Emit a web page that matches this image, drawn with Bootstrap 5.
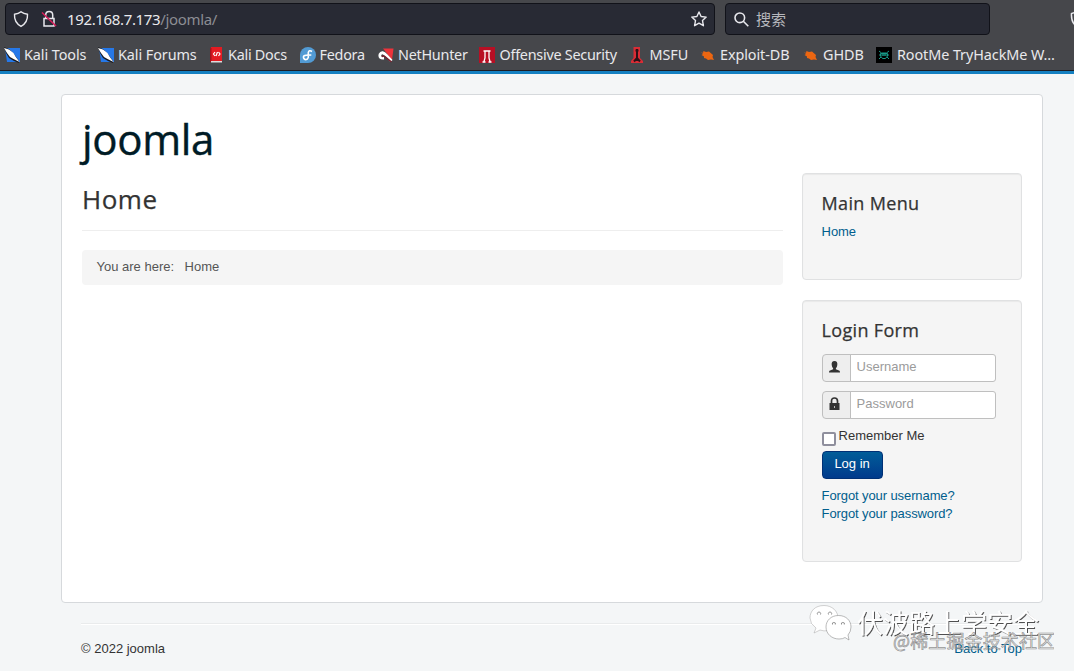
<!DOCTYPE html>
<html lang="en">
<head>
<meta charset="utf-8">
<meta name="viewport" content="width=device-width, initial-scale=1">
<title>joomla</title>
<link rel="stylesheet" href="https://cdn.jsdelivr.net/npm/bootstrap@5.3.0/dist/css/bootstrap.min.css">
<style>
body{font:13px/18px "Liberation Sans",Arial,sans-serif;color:#333;background:#f4f6f7;height:671px;overflow:hidden}
a{color:#005e8d;text-decoration:none}
h1,h2,h3{font-family:"Open Sans","Noto Sans",sans-serif;font-weight:400;margin:0;white-space:nowrap;-webkit-text-stroke:.25px currentColor}
svg{display:block;flex:none}
.browser{height:71px;background:#46474b;border-bottom:1px solid #1c1d24;font:15px/20px "Noto Sans","Noto Sans CJK SC",sans-serif;color:#e9e9ec;overflow:hidden}
.toolbar-row{padding:3px 0 0 5px;height:39px}
.field{height:32px;background:#282a34;border:1px solid #111219;border-radius:4px}
.address{width:710px;padding:0 7px}
.url{letter-spacing:-.35px}
.url-path{color:#8c8d93}
.lock{margin:0 10px 0 12px}
.search{width:265px;margin-left:10px;padding-left:8px;color:#b7b8bd}
.bookmarks{display:grid;grid-template-columns:94px 111px 91px 78px 101px 151px 70px 104px 72px 190px;padding-left:4px;height:32px;align-items:center;font-size:14.4px;letter-spacing:-.08px}
.bookmarks span{display:flex;align-items:center;gap:4px;white-space:nowrap}
.bookmarks .tight{letter-spacing:-.26px}
.site{border-top:3px solid #1580c1;height:600px;padding:20px 31px 0 61px}
.sheet{height:509px;background:#fff;border:1px solid #d6d9dc;border-radius:4px;padding:20px}
.brand-title{font-size:42px;line-height:48px;color:#001b26;letter-spacing:-.3px;-webkit-text-stroke-width:.4px}
.columns{gap:19px;margin-top:10px}
.main{width:701px}
.main h2{font-size:26px;line-height:36px;padding:8px 0 13px;height:58px;border-bottom:1px solid #eee;letter-spacing:.5px}
.crumbs{background:#f5f5f5;border-radius:4px;height:35px;margin-top:19px;padding:8px 14.5px;color:#555}
.side{width:220px}
.well{background:#f5f5f5;border:1px solid #e0e1e2;border-radius:4px;padding:19px 19px 19px 18.600px;box-shadow:inset 0 1px 1px rgba(0,0,0,.05)}
.well h3{font-size:18px;line-height:20px;letter-spacing:.33px}
.well a{letter-spacing:-.1px}
.login-field{width:174px;height:28px;margin-bottom:9px}
.login-field .input-group-text{width:29px;padding:0 0 2px 5px;background:#eee;border-color:#bfbfbf;border-radius:4px 0 0 4px}
.login-field .form-control{height:28px;border-color:#bfbfbf;border-radius:0 3px 3px 0;padding:2px 6px 5px;font-size:13px;line-height:18px}
.login-field .form-control::placeholder{color:#9b9b9b}
.remember{height:23px;gap:3px}
.remember label{margin-top:-1px}
.tick{width:14px;height:14px;border:2px solid #8f8f9d;border-radius:2px;margin:4px 0 0;appearance:none;background:#fff}
.login-btn{width:61px;height:28px;padding:2px 0 4px;font-size:13px;line-height:18px;color:#fff;border:1px solid #003075;border-radius:4px;background:linear-gradient(#015d99,#003a8c);display:block}
.foot{margin:20px 20px 0;border-top:1px solid #e9ebec;box-shadow:inset 0 1px #fff;padding-top:16px}
.foot a{margin-right:1px}
.marks{right:20px;bottom:14px;width:250px;height:54px;pointer-events:none}
</style>
<script src="https://cdn.jsdelivr.net/npm/bootstrap@5.3.0/dist/js/bootstrap.bundle.min.js"></script>
</head>
<body class="position-relative">
<header class="browser">
 <div class="toolbar-row d-flex">
  <div class="field address d-flex align-items-center">
   <svg width="16" height="18" viewBox="0 0 16 18" fill="none" stroke="#e8e8ed" stroke-width="1.4"><path d="M8 1.7Q10.5 3.8 14.5 4.3Q15 12.5 8 16.4Q1 12.5 1.5 4.3Q5.500 3.8 8 1.700Z"/></svg>
   <svg class="lock" width="16" height="18" viewBox="0 0 16 18" fill="none" stroke="#e8e8ed" stroke-width="1.5"><path d="M4.700 8V5Q4.700 1.500 8.200 1.500Q11.700 1.500 11.700 5V8M3 8.500H13V16H3Z"/><path d="M1 2.500L15 16" stroke="#d61c58" stroke-width="1.600"/></svg>
   <span class="url">192.168.7.173<span class="url-path">/joomla/</span></span>
   <svg class="ms-auto" width="16" height="16" viewBox="0 0 16 16" fill="none" stroke="#e8e8ed" stroke-width="1.400" stroke-linejoin="round"><path d="M8 1L10.100 5.500L15.200 6.100L11.500 9.600L12.400 14.700L8 12.200L3.600 14.700L4.500 9.600L.8 6.100L5.900 5.500Z"/></svg>
  </div>
  <div class="field search d-flex align-items-center">
   <svg style="margin-right:7px" width="15" height="15" viewBox="0 0 15 15" fill="none" stroke="#e8e8ed" stroke-width="1.600"><circle cx="5.800" cy="5.800" r="4.800"/><path d="M9.300 9.300L14.300 14.300"/></svg>搜索
  </div>
  <svg class="ms-auto" width="4" height="32" viewBox="0 0 4 32" fill="none" stroke="#e8e8ed" stroke-width="1.500"><path d="M5 9.500L1.500 10.500Q1 18 5 22"/></svg>
 </div>
 <nav class="bookmarks">
  <span><svg width="16" height="16" viewBox="0 0 16 16"><path fill="#2678e8" d="M1 1H16V15H3Z"/><path fill="#171a20" d="M0 0L5 2L10 7L15 14V16L10 14L5 11L2 6Z"/><path fill="#fff" d="M0 1L5 2.500L9.500 6L11.500 9.500L15.500 15L9.500 12L6 10L3 6Z"/></svg>Kali Tools</span>
  <span><svg width="16" height="16" viewBox="0 0 16 16"><path fill="#2678e8" d="M1 1H16V15H3Z"/><path fill="#171a20" d="M0 0L5 2L10 7L15 14V16L10 14L5 11L2 6Z"/><path fill="#fff" d="M0 1L5 2.500L9.500 6L11.500 9.500L15.500 15L9.500 12L6 10L3 6Z"/></svg>Kali Forums</span>
  <span class="tight" style="gap:3px"><svg width="16" height="16" viewBox="0 0 16 16"><path fill="#e31b22" d="M2 0H13V14H2Z"/><path fill="#a3131c" d="M1 1H2.500V15H1Z"/><path fill="#ddd" d="M2 14H13V15.500H2Z"/><path d="M6 5L4.500 7L6 9M9.500 5L11 7L9.500 9M8.500 5L7 9" stroke="#fff" stroke-width="1.200" fill="none"/></svg>Kali Docs</span>
  <span class="tight" style="gap:3.500px"><svg width="16" height="16" viewBox="0 0 16 16"><path fill="#529bd4" d="M8 0A8 8 0 1 1 8 16H0V8A8 8 0 0 1 8 0Z"/><path d="M12 4.500Q9 2.500 8.300 5.500V10.500Q7.500 13 5 12.500Q2.500 11 4 8.800Q5 8 11.300 8" stroke="#fff" stroke-width="1.600" fill="none"/></svg>Fedora</span>
  <span class="tight"><svg width="16" height="16" viewBox="0 0 16 16"><path fill="#ed333b" d="M5 1.500H15.500L14 13Z"/><path d="M13.500 14L8.500 8.500Q4 3.500 2 7.500Q1 11.500 6 11" stroke="#fff" stroke-width="2.800" fill="none"/><path d="M13.500 15L7.500 10Q5 8 4 10" stroke="#75202c" fill="none" stroke-width="1.500"/></svg>NetHunter</span>
  <span class="tight" style="gap:4.500px"><svg width="16" height="16" viewBox="0 0 16 16"><path fill="#b80f24" d="M0 0H16V16H0Z"/><path d="M4.500 4H11.500M6 4V11L5 14.500M10 4V11L11 14.500M3.500 15H6.500M9.500 15H12.500" stroke="#fff" stroke-width="1.300" fill="none"/></svg>Offensive Security</span>
  <span><svg width="16" height="16" viewBox="0 0 16 16"><path fill="#d92c35" d="M3.500 0H10V11L13 14V16H1V14L3.500 11Z"/><path d="M7 2V14M5.500 3.500H8.500M4 14.500L7 11L10 14.500" stroke="#2a1218" stroke-width="2" fill="none"/></svg><i class="fst-normal" style="margin-left:-.5px">MSFU</i></span>
  <span><svg width="16" height="16" viewBox="0 0 16 16"><path fill="#ec6611" d="M1 5L3 6L3.500 4L6 5L9 4.500L13 8L12.500 10L14 13L11 12.500L8 13L6 11.500L4 11L4 9.500L1.500 8L3 7Z"/></svg>Exploit-DB</span>
  <span style="gap:3px"><svg width="16" height="16" viewBox="0 0 16 16"><path fill="#ec6611" d="M0 5L2 6L2.500 4L5 5L8 4.500L12 8L11.500 10L13 13L10 12.500L7 13L5 11.500L3 11L3 9.500L.5 8L2 7Z"/></svg>GHDB</span>
  <span style="gap:5px"><svg width="16" height="16" viewBox="0 0 16 16"><path d="M0 0H16V16H0Z"/><path d="M3 4L5.500 6H10.500L13 4M4.500 6.500H11.500V9L9.500 11.500H6.500L4.500 9ZM3 8H13M3 12L5 10M13 12L11 10M6 8H10" stroke="#179a88" fill="none"/></svg>RootMe TryHackMe W…</span>
 </nav>
</header>
<div class="site">
 <div class="sheet">
  <h1 class="brand-title">joomla</h1>
  <div class="columns d-flex align-items-start">
   <main class="main">
    <h2>Home</h2>
    <div class="crumbs d-flex"><span style="margin-right:10.5px">You are here:</span><span>Home</span></div>
   </main>
   <aside class="side">
    <section class="well" style="height:107px"><h3>Main Menu</h3><div style="margin-top:10px"><a href="#">Home</a></div></section>
    <section class="well" style="height:262px;margin-top:20px">
     <h3 style="margin-bottom:14px">Login Form</h3>
     <div class="input-group login-field flex-nowrap"><span class="input-group-text"><svg width="13" height="13" viewBox="0 0 13 13"><path fill="#333" d="M6.500 0C8.700 0 9.600 1.500 9.300 4Q9 6.300 7.900 7.300V8.300L11.500 9.700Q12 10.200 12 11.500H1Q1 10.200 1.500 9.700L5.100 8.300V7.300Q4 6.300 3.700 4C3.400 1.500 4.300 0 6.500 0Z"/></svg></span><input class="form-control" placeholder="Username" aria-label="Username"></div>
     <div class="input-group login-field flex-nowrap"><span class="input-group-text"><svg width="13" height="14" viewBox="0 0 13 14"><path d="M3.500 7V4Q3.500 1 6.500 1Q9.500 1 9.500 4V7" stroke="#333" stroke-width="1.700" fill="none"/><path fill="#333" d="M1.500 6H11.500V13H1.500Z"/><path fill="#bbb" d="M6 9H7V11H6Z"/></svg></span><input type="password" class="form-control" placeholder="Password" aria-label="Password"></div>
     <div class="remember d-flex"><input type="checkbox" class="tick" id="rem"><label for="rem">Remember Me</label></div>
     <button class="btn login-btn">Log in</button>
     <div style="margin-top:8px"><a class="d-block" href="#">Forgot your username?</a><a class="d-block" href="#">Forgot your password?</a></div>
    </section>
   </aside>
  </div>
 </div>
 <footer class="foot d-flex justify-content-between"><span>© 2022 joomla</span><a href="#">Back to Top</a></footer>
</div>
<svg class="marks position-absolute" viewBox="804 603 250 54">
 <defs><filter id="edge" x="-5%" y="-10%" width="110%" height="125%"><feDropShadow dx="1" dy="1" stdDeviation=".3" flood-color="#333" flood-opacity=".85"/></filter></defs>
 <g fill="#fff" stroke="#a5a5a5" stroke-width=".5">
  <path d="M824 605.500C815 605.500 810 611 810 618Q810 624 816 628L814 633L820 630Q824 631.500 828 630.500C836 629 838 624 838 618C838 611 832 605.500 824 605.500Z"/>
  <path stroke="#777" d="M838.500 615.500C831 615.500 826 620.500 826 627C826 634 832 639 839 639Q843 639 845 637.500L849 640L848 635Q851 631.500 851 627C851 620.500 846 615.500 838.500 615.500Z"/>
  <g fill="none" stroke="#777" stroke-width=".8"><path d="M817.500 614.500A1.700 1.700 0 1 1 820.500 614.500M828.500 614.500A1.700 1.700 0 1 1 831.500 614.500M832.500 624.500A1.500 1.500 0 1 1 835.300 624.500M841.500 624.500A1.500 1.500 0 1 1 844.300 624.500"/></g>
 </g>
 <text x="857" y="632.500" font-family="Noto Sans CJK SC,sans-serif" font-size="26" textLength="182" fill="#fff" filter="url(#edge)">伏波路上学安全</text>
 <text x="893" y="648" font-family="Noto Sans CJK SC,sans-serif" font-size="18" textLength="162" fill="#ddd" fill-opacity=".5" stroke="#777" stroke-width=".65" stroke-opacity=".8">@稀土掘金技术社区</text>
</svg>
</body>
</html>
